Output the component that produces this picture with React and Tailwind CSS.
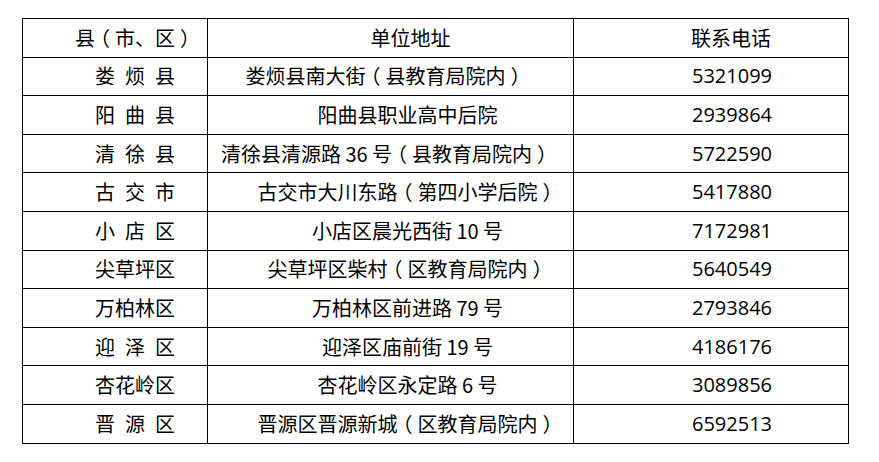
import React from "react";

const rows = [
  { county: "娄\u2002烦\u2002县", addr: "娄烦县南大街（县教育局院内）", addrPad: "pr-[10px]", tel: "5321099" },
  { county: "阳\u2002曲\u2002县", addr: "阳曲县职业高中后院", addrPad: "pl-[34px]", tel: "2939864" },
  { county: "清\u2002徐\u2002县", addr: "清徐县清源路 36 号（县教育局院内）", addrPad: "pr-[8px]", tel: "5722590" },
  { county: "古\u2002交\u2002市", addr: "古交市大川东路（第四小学后院）", addrPad: "pl-[34px]", tel: "5417880" },
  { county: "小\u2002店\u2002区", addr: "小店区晨光西街 10 号", addrPad: "pl-[34px]", tel: "7172981" },
  { county: "尖草坪区", addr: "尖草坪区柴村（区教育局院内）", addrPad: "pl-[34px]", tel: "5640549" },
  { county: "万柏林区", addr: "万柏林区前进路 79 号", addrPad: "pl-[34px]", tel: "2793846" },
  { county: "迎\u2002泽\u2002区", addr: "迎泽区庙前街 19 号", addrPad: "pl-[34px]", tel: "4186176" },
  { county: "杏花岭区", addr: "杏花岭区永定路 6 号", addrPad: "pl-[34px]", tel: "3089856" },
  { county: "晋\u2002源\u2002区", addr: "晋源区晋源新城（区教育局院内）", addrPad: "pl-[34px]", tel: "6592513" },
];

// full-width brackets drawn centred in their box, as in the source document
function Text({ children }) {
  const parts = children.split(/([（）])/);
  return parts.map((p, i) =>
    p === "（" || p === "）" ? (
      <span key={i} className="inline-block mx-[5px] [font-feature-settings:'halt']">
        {p}
      </span>
    ) : (
      p
    )
  );
}

function Cell({ className = "", children }) {
  return (
    <div
      className={
        "h-[38.6px] border-r border-b border-black flex items-center justify-center whitespace-pre " +
        className
      }
    >
      <span>
        <Text>{children}</Text>
      </span>
    </div>
  );
}

export default function App() {
  return (
    <div
      className="w-[879px] h-[462px] bg-white pt-[18px] pl-[22px] text-black text-[20px] leading-none"
      style={{ fontFamily: '"Noto Sans CJK SC", "Noto Sans", sans-serif' }}
    >
      <div className="grid grid-cols-[185px_366px_275px] w-[827px] border-l border-t border-black">
        <Cell className="pl-[40px]">县（市、区）</Cell>
        <Cell className="pl-[40px]">单位地址</Cell>
        <Cell className="pl-[40px]">联系电话</Cell>
        {rows.map((r) => (
          <React.Fragment key={r.tel}>
            <Cell className="pl-[40px]">{r.county}</Cell>
            <Cell className={r.addrPad}>{r.addr}</Cell>
            <Cell className="pl-[42px] [font-family:'Open_Sans',sans-serif]">{r.tel}</Cell>
          </React.Fragment>
        ))}
      </div>
    </div>
  );
}
